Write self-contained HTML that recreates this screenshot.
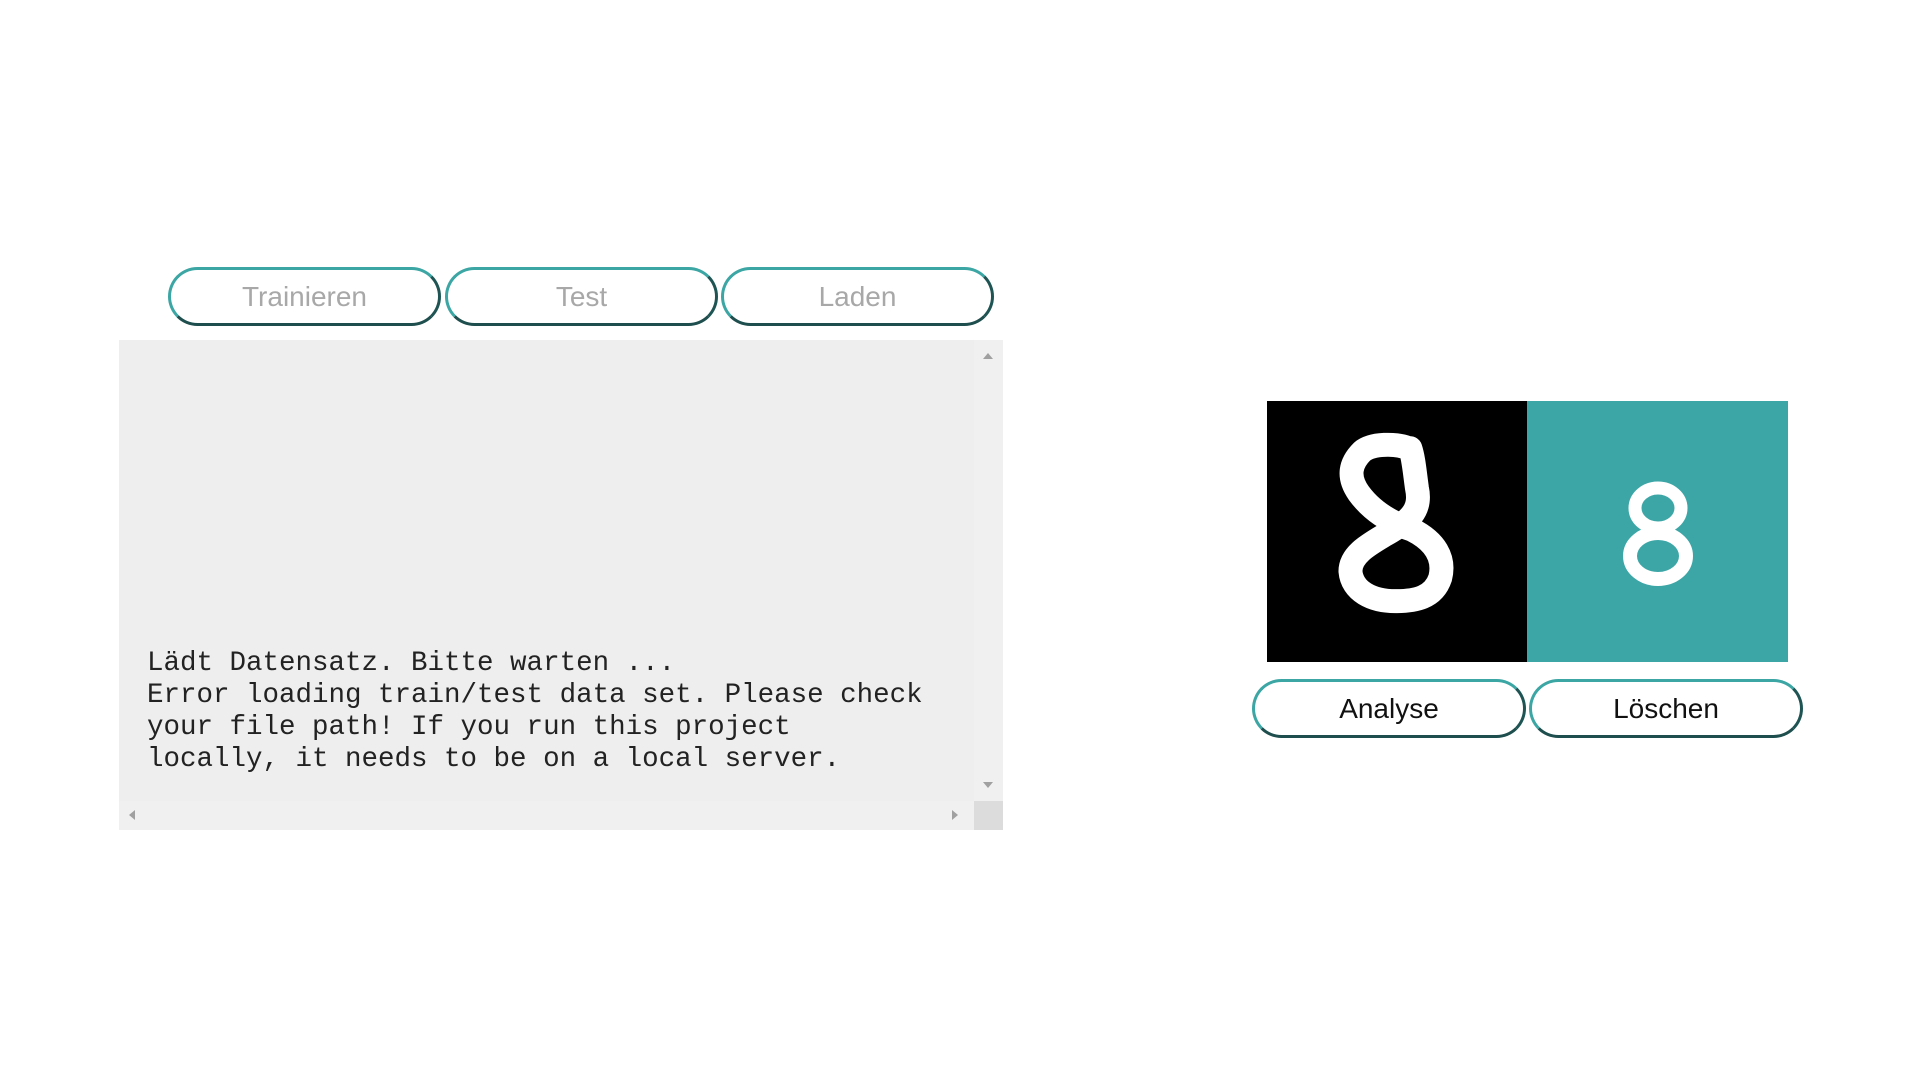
<!DOCTYPE html>
<html><head><meta charset="utf-8"><style>
body{margin:0;width:1920px;height:1080px;background:#fff;position:relative;overflow:hidden;font-family:"Liberation Sans",sans-serif}
.btn{position:absolute;box-sizing:border-box;height:59px;border-radius:30px;border:3px solid;border-color:#3ba6a4 #1e5554 #1e4e4d #3ba6a4;background:#fff;text-align:center;line-height:53px;font-size:28px}
.g{color:#a8a8a8}
.k{color:#111}
#ta{position:absolute;left:119px;top:340px;width:884px;height:490px;background:#eeeeee}
#vs{position:absolute;right:0;top:0;width:29px;height:461px;background:#f0f0f0}
#hs{position:absolute;left:0;bottom:0;width:855px;height:29px;background:#f0f0f0}
#corner{position:absolute;right:0;bottom:0;width:29px;height:29px;background:#dcdcdc}
pre{position:absolute;left:28px;top:308px;margin:0;font-family:"Liberation Mono",monospace;font-size:27.5px;line-height:32px;color:#222}
.tri{position:absolute;width:0;height:0}
</style></head><body>
<div class="btn g" style="left:168px;top:267px;width:273px">Trainieren</div>
<div class="btn g" style="left:445px;top:267px;width:273px">Test</div>
<div class="btn g" style="left:721px;top:267px;width:273px">Laden</div>
<div id="ta">
<div id="vs"></div><div id="hs"></div><div id="corner"></div>
<div class="tri" style="right:10px;top:13px;border-left:5px solid transparent;border-right:5px solid transparent;border-bottom:6px solid #a0a0a0"></div>
<div class="tri" style="right:10px;top:442px;border-left:5px solid transparent;border-right:5px solid transparent;border-top:6px solid #a0a0a0"></div>
<div class="tri" style="left:10px;bottom:10px;border-top:5px solid transparent;border-bottom:5px solid transparent;border-right:6px solid #a0a0a0"></div>
<div class="tri" style="left:833px;bottom:10px;border-top:5px solid transparent;border-bottom:5px solid transparent;border-left:6px solid #a0a0a0"></div>
<pre>Lädt Datensatz. Bitte warten ...
Error loading train/test data set. Please check
your file path! If you run this project
locally, it needs to be on a local server.</pre>
</div>
<div style="position:absolute;left:1267px;top:401px;width:260px;height:261px;background:#000">
<svg width="260" height="261" viewBox="15 8 780 785"><path fill="none" stroke="#fff" stroke-width="72" stroke-linejoin="round" stroke-linecap="round" d="M440,150 C400,135 330,135 300,160 C265,195 255,235 290,285 C330,340 390,375 450,395 C520,430 550,480 535,540 C515,600 460,610 400,610 C330,610 270,580 265,520 C265,470 320,440 370,410 C440,370 480,340 465,270 C458,220 455,180 445,150"/></svg>
</div>
<div style="position:absolute;left:1527px;top:401px;width:261px;height:261px;background:#3ca6a7">
<svg width="261" height="261"><ellipse cx="131" cy="107" rx="23" ry="20" fill="none" stroke="#fff" stroke-width="13"/><ellipse cx="131" cy="155" rx="28" ry="23" fill="none" stroke="#fff" stroke-width="14"/></svg>
</div>
<div class="btn k" style="left:1252px;top:679px;width:274px">Analyse</div>
<div class="btn k" style="left:1529px;top:679px;width:274px">Löschen</div>
</body></html>
